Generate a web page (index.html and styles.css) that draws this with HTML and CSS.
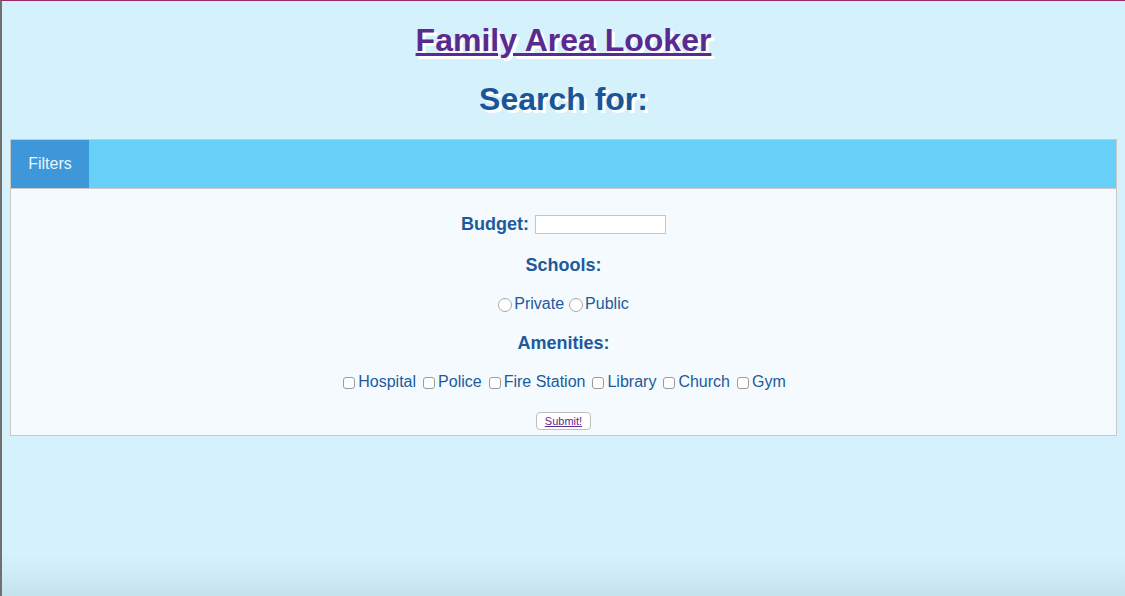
FILE: index.html
```html
<!DOCTYPE html>
<html lang="en">
<head>
<meta charset="utf-8">
<title>Family Area Looker</title>
<link rel="stylesheet" href="styles.css">
</head>
<body>
  <header class="masthead">
    <h1 class="title"><a href="#" class="title-link">Family Area Looker</a></h1>
    <h2 class="subtitle">Search for:</h2>
  </header>
  <section class="panel">
    <div class="tabs">
      <div class="tab">Filters</div>
    </div>
    <form class="filters">
      <div class="row row-budget">
        <label class="label" for="budget">Budget:</label>
        <input class="text-input" id="budget" type="text">
      </div>
      <div class="row"><span class="label">Schools:</span></div>
      <div class="row row-options">
        <label class="opt"><input class="radio" type="radio" name="school">Private</label>
        <label class="opt"><input class="radio" type="radio" name="school">Public</label>
      </div>
      <div class="row"><span class="label">Amenities:</span></div>
      <div class="row row-options">
        <label class="opt"><input class="check" type="checkbox">Hospital</label>
        <label class="opt"><input class="check" type="checkbox">Police</label>
        <label class="opt"><input class="check" type="checkbox">Fire Station</label>
        <label class="opt"><input class="check" type="checkbox">Library</label>
        <label class="opt"><input class="check" type="checkbox">Church</label>
        <label class="opt"><input class="check" type="checkbox">Gym</label>
      </div>
      <div class="row row-submit">
        <button class="submit" type="button"><span class="submit-text">Submit!</span></button>
      </div>
    </form>
  </section>
</body>
</html>
```

FILE: styles.css
```css
html {
  height: 100%;
  background: linear-gradient(to bottom, #d5f1fc 0, #d5f1fc 93%, #c5e3ef 100%);
}

body {
  margin: 0;
  min-height: 100%;
  box-sizing: border-box;
  border-top: 1px solid #9b2c69;
  border-left: 2px solid #707070;
  padding: 0 8px;
  font-family: "Liberation Sans", Arial, sans-serif;
  color: #1d5a9c;
}

.masthead {
  display: flex;
  flex-direction: column;
  align-items: center;
}

.title {
  margin: 21px 0 0;
  font-size: 32px;
  line-height: 37px;
  font-weight: bold;
}

.title-link {
  color: #5b2a91;
  text-decoration: underline;
  text-shadow: 3px 3px 0 #ffffff;
}

.subtitle {
  margin: 22px 0 0;
  font-size: 32px;
  line-height: 37px;
  font-weight: bold;
  color: #1c5597;
  text-shadow: 3px 3px 0 #ffffff;
}

.panel {
  margin-top: 21px;
  border: 1px solid #c9c9c9;
  background: #f4fafd;
}

.tabs {
  display: flex;
  height: 48px;
  background: #66d0f8;
  border-bottom: 1px solid #c9c9c9;
}

.tab {
  width: 78px;
  display: flex;
  align-items: center;
  justify-content: center;
  background: #3d97d8;
  color: #e8f6ff;
  font-family: "Liberation Sans", Helvetica, Arial, sans-serif;
  font-size: 16px;
}

.filters {
  display: flex;
  flex-direction: column;
  align-items: center;
  gap: 17px;
  padding: 23px 0 5px;
}

.row {
  display: flex;
  align-items: center;
  justify-content: center;
  height: 24px;
}

.row-options {
  height: 20px;
}

.row-submit {
  height: 18px;
  margin-top: 3px;
}

.label {
  font-size: 18px;
  font-weight: bold;
  color: #1d5a9c;
}

.text-input {
  width: 131px;
  height: 19px;
  box-sizing: border-box;
  margin: 0 0 0 6px;
  border: 1px solid #c6c6c6;
  background: #ffffff;
  padding: 0 3px;
  font-size: 13px;
}

.opt {
  display: flex;
  align-items: center;
  font-size: 16px;
  color: #1d5a9c;
  margin-right: 5px;
}

.opt:last-child {
  margin-right: 0;
}

.radio {
  appearance: none;
  width: 14px;
  height: 14px;
  margin: 1px 2px 0 0;
  border: 1px solid #a8a8a8;
  border-radius: 50%;
  background: #ffffff;
  box-sizing: border-box;
}

.check {
  appearance: none;
  width: 12px;
  height: 12px;
  margin: 1px 3px 0 2px;
  border: 1px solid #9c9c9c;
  border-radius: 3px;
  background: #ffffff;
  box-sizing: border-box;
}

.submit {
  width: 55px;
  height: 18px;
  padding: 0;
  border: 1px solid #bdbdbd;
  border-radius: 4px;
  background: #ffffff;
  font-family: "Liberation Sans", Arial, sans-serif;
  font-size: 11px;
  line-height: 16px;
}

.submit-text {
  color: #5b2a91;
  text-decoration: underline;
}
```
